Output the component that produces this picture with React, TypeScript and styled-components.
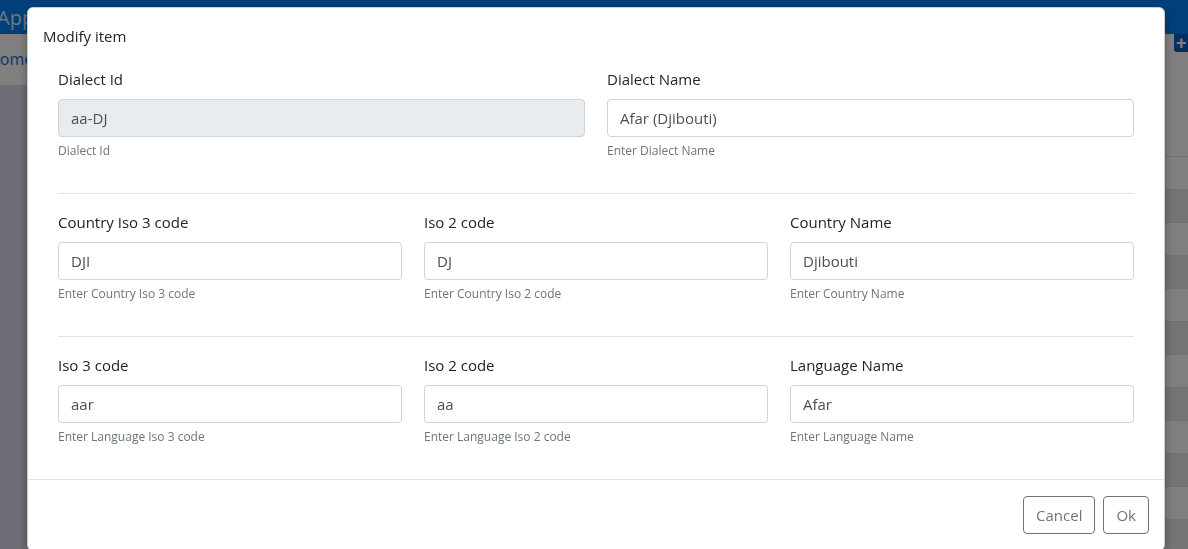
import React from 'react';
import styled, { createGlobalStyle } from 'styled-components';

const GlobalStyle = createGlobalStyle`
  html, body {
    margin: 0;
    padding: 0;
    height: 100%;
    overflow: hidden;
  }
  body {
    font-family: 'Open Sans', 'Noto Sans', Arial, sans-serif;
    color: #212529;
  }
  * {
    box-sizing: border-box;
  }
`;

interface Field {
  label: string;
  value: string;
  help: string;
  disabled?: boolean;
}

const sections: Field[][] = [
  [
    { label: 'Dialect Id', value: 'aa-DJ', help: 'Dialect Id', disabled: true },
    { label: 'Dialect Name', value: 'Afar (Djibouti)', help: 'Enter Dialect Name' },
  ],
  [
    { label: 'Country Iso 3 code', value: 'DJI', help: 'Enter Country Iso 3 code' },
    { label: 'Iso 2 code', value: 'DJ', help: 'Enter Country Iso 2 code' },
    { label: 'Country Name', value: 'Djibouti', help: 'Enter Country Name' },
  ],
  [
    { label: 'Iso 3 code', value: 'aar', help: 'Enter Language Iso 3 code' },
    { label: 'Iso 2 code', value: 'aa', help: 'Enter Language Iso 2 code' },
    { label: 'Language Name', value: 'Afar', help: 'Enter Language Name' },
  ],
];

const tableRows = Array.from({ length: 12 }, (_, i) => i);

export default function App() {
  return (
    <>
      <GlobalStyle />
      <Page>
        <TopBar>
          <Brand>App</Brand>
        </TopBar>
        <Breadcrumb>
          <Crumb>Home</Crumb>
          <AddButton>+</AddButton>
        </Breadcrumb>
        <Content>
          <Gutter />
          <Panel>
            <TableHead />
            {tableRows.map(i => (
              <TableRow key={i} striped={i % 2 === 1} />
            ))}
            <Pager />
          </Panel>
        </Content>

        <Backdrop />
        <ModalLayer>
          <Modal>
            <ModalHeader>
              <ModalTitle>Modify item</ModalTitle>
            </ModalHeader>
            <ModalBody>
              {sections.map((fields, si) => (
                <React.Fragment key={si}>
                  {si > 0 && <Divider />}
                  <FieldRow cols={fields.length}>
                    {fields.map(f => (
                      <FieldGroup key={f.label + f.help}>
                        <Label>{f.label}</Label>
                        <Input value={f.value} disabled={f.disabled} readOnly />
                        <Help>{f.help}</Help>
                      </FieldGroup>
                    ))}
                  </FieldRow>
                </React.Fragment>
              ))}
            </ModalBody>
            <ModalFooter>
              <OutlineButton>Cancel</OutlineButton>
              <OutlineButton>Ok</OutlineButton>
            </ModalFooter>
          </Modal>
        </ModalLayer>
      </Page>
    </>
  );
}

const Page = styled.div`
  position: relative;
  width: 100%;
  height: 100vh;
  overflow: hidden;
  display: flex;
  flex-direction: column;
  background: #d8dbea;
`;

const TopBar = styled.header`
  height: 34px;
  flex-shrink: 0;
  background: #007ef4;
  display: flex;
  align-items: center;
`;

const Brand = styled.span`
  margin-left: -3px;
  font-size: 20px;
  color: rgba(255, 255, 255, 0.9);
`;

const Breadcrumb = styled.nav`
  height: 51px;
  flex-shrink: 0;
  background: #fff;
  display: flex;
  justify-content: space-between;
  align-items: flex-start;
`;

const Crumb = styled.a`
  margin: 14px 0 0 -12px;
  font-size: 16px;
  color: #0a73e0;
`;

const AddButton = styled.button`
  width: 22px;
  height: 18px;
  margin-right: -8px;
  padding: 0 0 0 2px;
  border: none;
  border-radius: 0 0 0 3px;
  background: #0a5cc4;
  color: #fff;
  font-size: 18px;
  font-weight: 700;
  line-height: 18px;
  text-align: left;
`;

const Content = styled.div`
  flex: 1;
  display: flex;
`;

const Gutter = styled.div`
  width: 200px;
  flex-shrink: 0;
`;

const Panel = styled.div`
  flex: 1;
  background: #fff;
  padding-top: 39px;
`;

const TableHead = styled.div`
  height: 33px;
  border-bottom: 1px solid #dee2e6;
`;

const TableRow = styled.div<{ striped: boolean }>`
  height: 33px;
  border-bottom: 1px solid #dee2e6;
  background: ${({ striped }) => (striped ? '#e8e8e8' : '#fff')};
`;

const Pager = styled.div`
  width: 30px;
  height: 30px;
  margin: 14px 0 0 calc(100% - 12px);
  border: 1px solid #dee2e6;
  border-radius: 4px;
`;

const Backdrop = styled.div`
  position: fixed;
  inset: 0;
  background: rgba(0, 0, 0, 0.5);
`;

const ModalLayer = styled.div`
  position: fixed;
  inset: 0;
  padding: 7px 0 0 27px;
`;

const Modal = styled.div`
  width: 1138px;
  background: #fff;
  border: 1px solid rgba(0, 0, 0, 0.2);
  border-radius: 6px;
  box-shadow: 0 4px 8px rgba(0, 0, 0, 0.35);
`;

const ModalHeader = styled.div`
  padding: 16px 15px 0;
`;

const ModalTitle = styled.h5`
  margin: 0;
  font-size: 15px;
  font-weight: 400;
  line-height: 24px;
  color: #212529;
`;

const ModalBody = styled.div`
  padding: 19px 30px 33px 30px;
`;

const FieldRow = styled.div<{ cols: number }>`
  display: grid;
  grid-template-columns: repeat(${({ cols }) => cols}, 1fr);
  column-gap: 22px;
`;

const FieldGroup = styled.div`
  display: flex;
  flex-direction: column;
`;

const Label = styled.label`
  font-size: 15px;
  line-height: 24px;
  margin-bottom: 8px;
  color: #212529;
`;

const Input = styled.input`
  height: 38px;
  padding: 0 12px;
  border: 1px solid #ced4da;
  border-radius: 4px;
  font-family: inherit;
  font-size: 15px;
  color: #495057;
  background: #fff;
  outline: none;

  &:disabled {
    background: #e9ecef;
    color: #495057;
    opacity: 1;
  }
`;

const Help = styled.small`
  margin-top: 5px;
  font-size: 12px;
  line-height: 18px;
  color: #6c757d;
`;

const Divider = styled.hr`
  margin: 33px 0 16px;
  border: 0;
  border-top: 1px solid #e3e4e6;
`;

const ModalFooter = styled.div`
  display: flex;
  justify-content: flex-end;
  gap: 8px;
  padding: 16px 15px 16px;
  border-top: 1px solid #dee2e6;
`;

const OutlineButton = styled.button`
  height: 38px;
  padding: 0 12px;
  border: 1px solid #6c757d;
  border-radius: 4px;
  background: transparent;
  font-family: inherit;
  font-size: 15px;
  color: #6c757d;
`;
